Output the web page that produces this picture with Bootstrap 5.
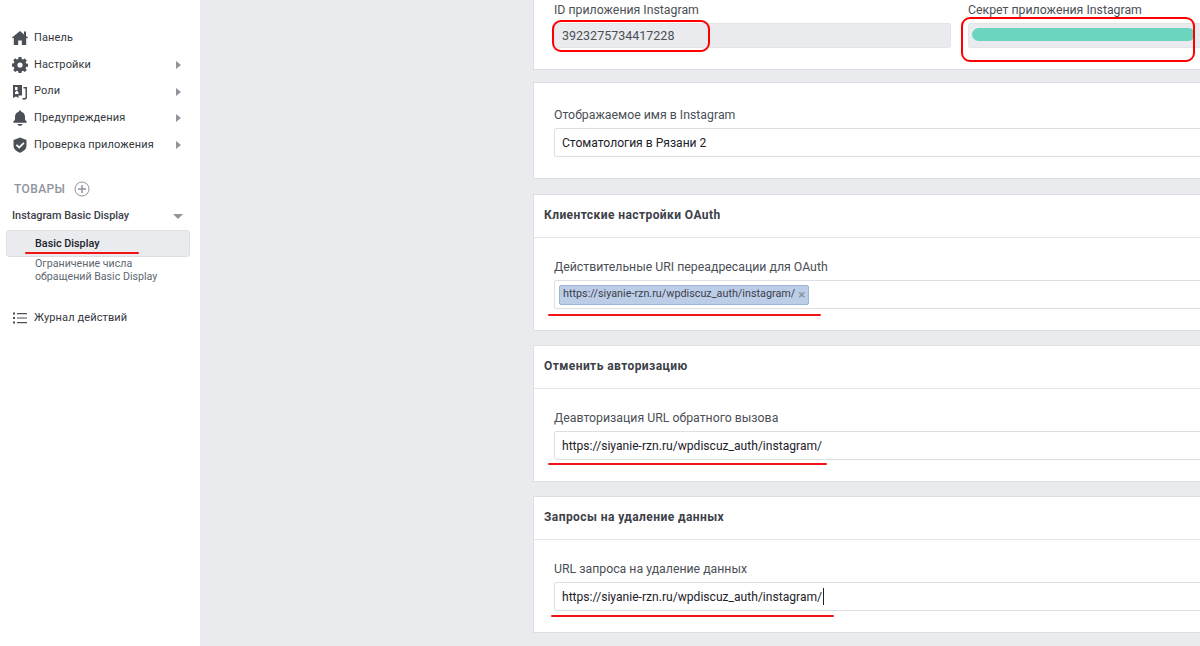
<!DOCTYPE html>
<html lang="ru">
<head>
<meta charset="UTF-8">
<title>Instagram Basic Display</title>
<link href="https://cdn.jsdelivr.net/npm/bootstrap@5.3.3/dist/css/bootstrap.min.css" rel="stylesheet">
<style>
html, body { height: 646px; overflow: hidden; }
body { background: #e9ebee; font-family: Roboto, "Liberation Sans", sans-serif; color: #4b4f56; font-size: 13px; }
.page-wrap { width: 1200px; height: 646px; overflow: hidden; }
.side-bar { width: 200px; flex: 0 0 200px; background: #fff; padding-top: 25px; height: 646px; }
.side-item { height: 26.7px; padding-left: 12px; padding-right: 19px; color: #33373e; font-size: 11px; letter-spacing: .12px; }
.side-item svg.ico { width: 16px; height: 16px; flex: 0 0 16px; margin-right: 6px; fill: #4b4f56; }
.arrow-r { width: 0; height: 0; border-left: 5px solid #90949c; border-top: 4px solid transparent; border-bottom: 4px solid transparent; }
.arrow-d { width: 0; height: 0; border-top: 5px solid #90949c; border-left: 5px solid transparent; border-right: 5px solid transparent; margin-right: -2px; }
.prod-head { margin-top: 21px; padding-left: 14px; height: 20px; font-size: 12px; font-weight: 500; color: #90949c; letter-spacing: .4px; }
.prod-head svg { width: 16px; height: 16px; margin-left: 9px; }
.prod-name { height: 26px; margin-top: 4px; padding: 0 19px 0 12px; font-size: 10.9px; font-weight: 500; color: #3c4048; }
.prod-active { position: relative; margin: 1px 10px 0 6px; height: 27px; padding: 0 0 0 28px; background: #e9ebee; border: 1px solid #dddfe2; border-radius: 3px; font-size: 10.8px; font-weight: 500; color: #1d2129; }
.prod-sub { padding: 0 20px 0 35px; font-size: 10.65px; line-height: 13px; color: #606770; }
.side-log { margin-top: 21px; }
.main-col { padding-left: 333px; flex: 0 0 auto; }
.set-card { width: 853px; background: #fff; border: 1px solid #dddfe2; border-radius: 0; margin-bottom: 14px; }
.set-first { border-top: 0; height: 70px; margin-bottom: 12px; }
.set-name { height: 97px; margin-bottom: 15px; }
.set-head { height: 43px; padding: 0 10px 2px; font-size: 12px; font-weight: 700; color: #3c4048; letter-spacing: .42px; border-bottom: 1px solid #e5e6e9; }
.set-body { padding: 22px 20px 0; height: 92px; }
.set-first .set-body { padding-top: 3px; }
.set-name .set-body { padding-top: 25px; }
.fld-label { font-size: 12.3px; line-height: 15px; margin-bottom: 5px; color: #4b4f56; }
.fld-box { position: relative; }
.fld-input.form-control { height: 29px; padding: 0 7px; font-size: 12.1px; color: #1d2129; border: 1px solid #dddfe2; border-radius: 2px; box-shadow: none; }
.fld-input.form-control[readonly] { height: 25px; font-size: 12.5px; background: #e9ebee; color: #4b4f56; border-color: #e3e5e8; }
.fld-grid { display: grid; grid-template-columns: 397px 397px; column-gap: 17px; }
.fld-input.tag-box { display: flex; align-items: center; padding: 0 4px; }
.url-tag { display: inline-flex; align-items: center; height: 20px; padding: 0 3px; font-size: 10.8px; color: #3c4048; background: #bccde8; border: 1px solid #9cb4d8; border-radius: 2px; }
.url-tag b { font-weight: 700; color: #90949c; margin-left: 3px; font-size: 13px; line-height: 1; }
.red-line { position: absolute; height: 2px; background: #f01414; border-radius: 1px; }
.red-ring { position: absolute; border: 2px solid #f00; border-radius: 9px; pointer-events: none; }
.red-basic { left: 18px; top: 21px; width: 114px; }
.red-oauth { left: -6px; top: 34px; width: 273px; }
.red-deauth { left: -6px; top: 32px; width: 279px; }
.red-delete { left: -3px; top: 33px; width: 283px; }
.ring-id { left: -2px; top: -3px; width: 158px; height: 32px; }
.ring-secret { left: -7px; top: -6px; width: 234px; height: 45px; }
.teal-bar { position: absolute; left: 4px; top: 5px; width: 223px; height: 13px; background: #6bd5c0; border-radius: 7px; }
.text-caret { position: absolute; left: 269px; top: 6px; width: 1px; height: 17px; background: #1d2129; }
</style>
</head>
<body>
<div class="page-wrap d-flex">
  <aside class="side-bar">
    <div class="side-item d-flex align-items-center">
      <svg class="ico" viewBox="0 0 16 16"><path d="M8 1 0 7.500l.8 1L1.800 7.700V15h4.400v-4.500h3.600V15h4.400V7.700l1 .8.800-1-2-1.600V1.500h-2v3z"/></svg>Панель
    </div>
    <div class="side-item d-flex align-items-center">
      <svg class="ico" viewBox="0 0 16 16"><path fill-rule="evenodd" d="M6.600 0h2.800l.4 2.100 1.200.5 1.800-1.200 2 2-1.200 1.800.5 1.200 2.100.4v2.800l-2.100.4-.5 1.200 1.200 1.800-2 2-1.800-1.200-1.200.5-.4 2.100H6.600l-.4-2.100-1.200-.5-1.800 1.200-2-2 1.200-1.800-.5-1.200L-.2 9.400V6.600l2.100-.4.500-1.200-1.200-1.800 2-2L5 2.600l1.200-.5zM8 5.400a2.600 2.600 0 1 0 0 5.200a2.600 2.600 0 0 0 0-5.200z"/></svg>Настройки
      <span class="arrow-r ms-auto"></span>
    </div>
    <div class="side-item d-flex align-items-center">
      <svg class="ico" viewBox="0 0 16 16"><path fill-rule="evenodd" d="M1 1h9v10.500H6.500V14L4 12.500 1 14zm2 2v3h2.500V3zm1.200 3.800-1.200 1.700v1.500h3.500V8.500L5.300 6.800zM11.500 3H15v10.500c0 1.500-1.500 2.500-4.500 2v-1.500c2 .2 3 0 3-1V4.500h-2z"/></svg>Роли
      <span class="arrow-r ms-auto"></span>
    </div>
    <div class="side-item d-flex align-items-center">
      <svg class="ico" viewBox="0 0 16 16"><path d="M8 .5c.7 0 1.200.5 1.200 1.200C11.700 2.300 13 4.300 13 7v2.500l1.800 2.500v.8H1.200V12L3 9.500V7c0-2.700 1.300-4.700 3.800-5.300C6.800 1 7.300.5 8 .5zM5.500 14h5c0 1-1.100 1.800-2.500 1.800S5.500 15 5.500 14z"/></svg>Предупреждения
      <span class="arrow-r ms-auto"></span>
    </div>
    <div class="side-item d-flex align-items-center">
      <svg class="ico" viewBox="0 0 16 16"><path fill-rule="evenodd" d="M8 .5 14.500 3v5.500c0 3.500-2.800 6-6.500 7.300-3.700-1.300-6.500-3.800-6.500-7.300V3zm3.300 4.700L7.200 9.300 5 7.200 3.800 8.400l3.400 3.300 5.300-5.300z"/></svg>Проверка приложения
      <span class="arrow-r ms-auto"></span>
    </div>

    <div class="prod-head d-flex align-items-center">ТОВАРЫ
      <svg viewBox="0 0 16 16" fill="none" stroke="#90949c"><circle cx="8" cy="8" r="7"/><path stroke-width="1.500" d="M8 4v8M4 8h8"/></svg>
    </div>
    <div class="prod-name d-flex align-items-center">Instagram Basic Display<span class="arrow-d ms-auto"></span></div>
    <div class="prod-active d-flex align-items-center">Basic Display<span class="red-line red-basic"></span></div>
    <div class="prod-sub">Ограничение числа обращений Basic Display</div>
    <div class="side-item side-log d-flex align-items-center">
      <svg class="ico" viewBox="0 0 16 16"><path d="M1 2.500h2v2H1zM5 3h10v1.200H5zM1 7h2v2H1zm4 .4h10v1.200H5zM1 11.500h2v2H1zm4 .5h10v1.200H5z"/></svg>Журнал действий
    </div>
  </aside>

  <main class="main-col">
    <section class="set-card set-first">
      <div class="set-body">
        <div class="fld-grid">
          <div>
            <div class="fld-label">ID приложения Instagram</div>
            <div class="fld-box">
              <input class="form-control fld-input" readonly value="3923275734417228">
              <span class="red-ring ring-id"></span>
            </div>
          </div>
          <div>
            <div class="fld-label">Секрет приложения Instagram</div>
            <div class="fld-box">
              <input class="form-control fld-input" readonly>
              <span class="teal-bar"></span>
              <span class="red-ring ring-secret"></span>
            </div>
          </div>
        </div>
      </div>
    </section>

    <section class="set-card set-name">
      <div class="set-body">
        <div class="fld-label">Отображаемое имя в Instagram</div>
        <input class="form-control fld-input" value="Стоматология в Рязани 2">
      </div>
    </section>

    <section class="set-card">
      <div class="set-head d-flex align-items-center">Клиентские настройки OAuth</div>
      <div class="set-body">
        <div class="fld-label">Действительные URI переадресации для OAuth</div>
        <div class="fld-box">
          <div class="form-control fld-input tag-box"><span class="url-tag">https://siyanie-rzn.ru/wpdiscuz_auth/instagram/<b>×</b></span></div>
          <span class="red-line red-oauth"></span>
        </div>
      </div>
    </section>

    <section class="set-card">
      <div class="set-head d-flex align-items-center">Отменить авторизацию</div>
      <div class="set-body">
        <div class="fld-label">Деавторизация URL обратного вызова</div>
        <div class="fld-box">
          <input class="form-control fld-input" value="https://siyanie-rzn.ru/wpdiscuz_auth/instagram/">
          <span class="red-line red-deauth"></span>
        </div>
      </div>
    </section>

    <section class="set-card">
      <div class="set-head d-flex align-items-center">Запросы на удаление данных</div>
      <div class="set-body">
        <div class="fld-label">URL запроса на удаление данных</div>
        <div class="fld-box">
          <input class="form-control fld-input" value="https://siyanie-rzn.ru/wpdiscuz_auth/instagram/">
          <span class="text-caret"></span>
          <span class="red-line red-delete"></span>
        </div>
      </div>
    </section>
  </main>
</div>
<script src="https://cdn.jsdelivr.net/npm/bootstrap@5.3.3/dist/js/bootstrap.bundle.min.js"></script>
</body>
</html>
